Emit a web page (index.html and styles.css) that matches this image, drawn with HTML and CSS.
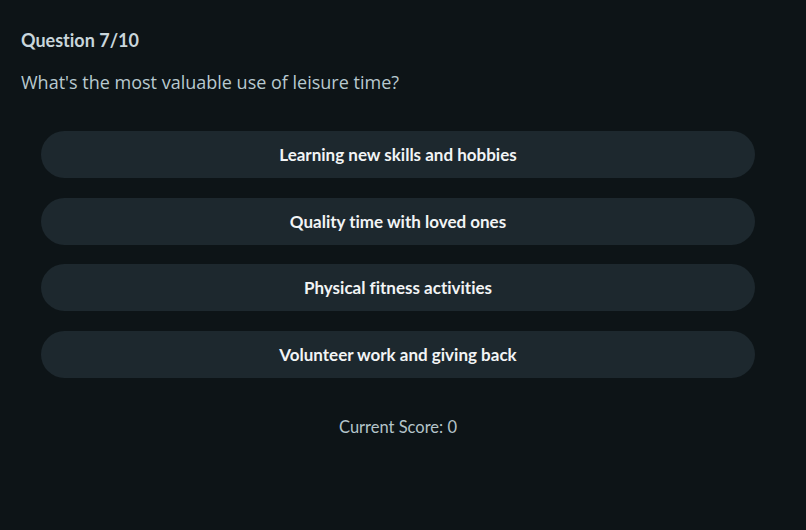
FILE: index.html
```html
<!DOCTYPE html>
<html lang="en">

<head>
    <meta charset="UTF-8">
    <meta name="viewport" content="width=device-width, initial-scale=1.0">
    <title>Quiz</title>
    <link rel="stylesheet" href="styles.css">
</head>

<body>
    <div class="quiz">
        <h2 class="counter">Question 7/10</h2>
        <p class="question">What's the most valuable use of leisure time?</p>
        <div class="answers">
            <button class="answer">Learning new skills and hobbies</button>
            <button class="answer">Quality time with loved ones</button>
            <button class="answer">Physical fitness activities</button>
            <button class="answer">Volunteer work and giving back</button>
        </div>
        <p class="score">Current Score: 0</p>
    </div>
</body>

</html>
```

FILE: styles.css
```css
html,
body {
    margin: 0;
    padding: 0;
    background-color: #0d1417;
    height: 100%;
}

.quiz {
    padding: 28px 31px 0 21px;
    font-family: Lato, "Noto Sans", sans-serif;
    font-variant-ligatures: none;
}

.counter {
    margin: 0;
    font-size: 18px;
    font-weight: 700;
    line-height: 24px;
    color: #c9d6db;
}

.question {
    margin: 18px 0 0;
    font-family: "Open Sans", sans-serif;
    font-size: 18px;
    line-height: 24px;
    color: #b8c9cf;
}

.answers {
    display: flex;
    flex-direction: column;
    gap: 19.5px;
    margin: 37px 20px 0;
}

.answer {
    height: 47px;
    border: none;
    border-radius: 24px;
    background-color: #1d282e;
    color: #f2f4f5;
    font-family: Lato, "Noto Sans", sans-serif;
    font-variant-ligatures: none;
    font-size: 17px;
    font-weight: 700;
    cursor: pointer;
}

.answer:hover {
    background-color: #26323a;
}

.score {
    margin: 38px 0 0;
    text-align: center;
    font-size: 16.5px;
    line-height: 22px;
    color: #b4c4ca;
}
```
